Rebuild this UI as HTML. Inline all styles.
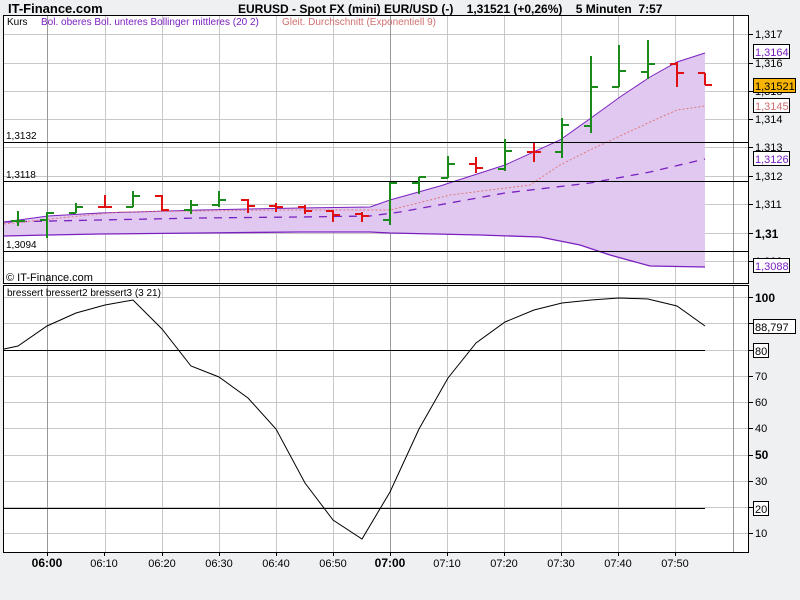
<!DOCTYPE html>
<html><head><meta charset="utf-8"><style>
body{margin:0;background:#eff0f2;}
svg{display:block;font-family:"Liberation Sans",sans-serif;}
</style></head><body>
<svg width="800" height="600" viewBox="0 0 800 600">
<rect width="800" height="600" fill="#eff0f2"/>
<text x="8" y="13" font-size="13" font-weight="bold" fill="#000">IT-Finance.com</text>
<text x="238" y="13" font-size="12" font-weight="bold" fill="#000" xml:space="preserve">EURUSD - Spot FX (mini) EUR/USD (-)    1,31521 (+0,26%)    5 Minuten  7:57</text>
<rect x="3.5" y="15.5" width="745" height="268" fill="#fff" stroke="#000"/>
<rect x="3.5" y="285.5" width="745" height="267" fill="#fff" stroke="#000"/>
<g stroke="#c8c8c8" stroke-width="1">
<path d="M4 34.5H748M4 63.5H748M4 91.5H748M4 119.5H748M4 147.5H748M4 176.5H748M4 204.5H748M4 233.5H748M4 261.5H748"/>
<path d="M4 297.5H748M4 323.5H748M4 350.5H748M4 376.5H748M4 402.5H748M4 428.5H748M4 455.5H748M4 481.5H748M4 507.5H748M4 533.5H748"/>
<path d="M105.5 16V283M162.5 16V283M219.5 16V283M276.5 16V283M333.5 16V283M447.5 16V283M504.5 16V283M561.5 16V283M618.5 16V283M675.5 16V283"/>
<path d="M105.5 286V552M162.5 286V552M219.5 286V552M276.5 286V552M333.5 286V552M447.5 286V552M504.5 286V552M561.5 286V552M618.5 286V552M675.5 286V552"/>
</g>
<g stroke="#999" stroke-width="1">
<path d="M47.5 16V283M390.5 16V283M733.5 16V283M47.5 286V552M390.5 286V552M733.5 286V552"/>
</g>
<path d="M4 222 L48 216 L100 213 L200 210 L300 208 L370 207 L390 200 L440 186 L505 165 L560 140 L591 118 L620 97 L650 77 L677 62 L705 53 L705 267 L650 266 L610 255 L580 245 L540 237 L480 235 L390 233 L370 232 L300 232 L200 233 L100 234 L48 235 L4 236 Z" fill="#e0c8f0"/>
<path d="M4 222 L48 216 L100 213 L200 210 L300 208 L370 207 L390 200 L440 186 L505 165 L560 140 L591 118 L620 97 L650 77 L677 62 L705 53" fill="none" stroke="#7a20c0" stroke-width="1"/>
<path d="M4 236 L48 235 L100 234 L200 233 L300 232 L370 232 L390 233 L480 235 L540 237 L580 245 L610 255 L650 266 L705 267" fill="none" stroke="#7a20c0" stroke-width="1.3"/>
<path d="M4 222 L100 220 L200 218 L300 217 L370 216 L400 212 L505 193 L590 183 L650 172 L705 159" fill="none" stroke="#7a20c0" stroke-width="1.3" stroke-dasharray="8,7"/>
<path d="M4 224 L60 218 L120 212 L200 211 L280 210 L390 210 L450 195 L530 185 L560 165 L590 150 L620 136 L650 122 L677 110 L705 106" fill="none" stroke="#e07878" stroke-width="1" stroke-dasharray="2,2"/>
<path d="M4 142.5H748M4 181.5H748M4 251.5H748M4 350.5H705M4 508.5H705" stroke="#000" stroke-width="1"/>
<g font-size="10" fill="#000">
<text x="6" y="139">1,3132</text><text x="6" y="178">1,3118</text><text x="6" y="248">1,3094</text>
</g>
<g stroke-width="2" fill="none">
<path stroke="#1a8a1a" d="M18 211V226M11 221H18M18 221H25 M47 212V238M40 220H47M47 213H54 M76 203V213M69 213H76M76 207H83 M133 191V207M126 207H133M133 196H140 M191 200V214M184 210H191M191 205H198 M219 191V207M212 205H219M219 200H226 M390 182V225M383 220H390M390 183H397 M419 177V194M412 183H419M419 177H426 M448 156V178M441 178H448M448 164H455 M505 139V171M498 169H505M505 151H512 M562 118V158M555 152H562M562 125H569 M591 56V133M584 126H591M591 87H598 M619 45V87M612 87H619M619 71H626 M648 40V79M641 72H648M648 64H655"/>
<path stroke="#e01010" d="M105 195V208M98 207H105M105 207H112 M162 195V211M155 196H162M162 210H169 M248 199V213M241 200H248M248 206H255 M276 203V212M269 206H276M276 207H283 M305 205V214M298 207H305M305 211H312 M333 210V222M326 211H333M333 215H340 M362 212V222M355 214H362M362 216H369 M476 157V173M469 164H476M476 168H483 M534 143V162M527 152H534M534 152H541 M677 62V87M670 64H677M677 73H684 M705 73V85M698 73H705M705 85H712"/>
</g>
<path d="M4 349 L18 346 L47 326 L76 313 L105 305 L133 300 L162 329 L191 366 L219 377 L248 398 L276 429 L305 483 L333 520 L362 539 L390 492 L419 429 L448 378 L476 343 L505 322 L534 310 L562 303 L591 300 L619 298 L648 299 L677 306 L705 326" fill="none" stroke="#000" stroke-width="1"/>
<text x="7" y="25" font-size="10" fill="#000">Kurs</text>
<text x="41" y="25" font-size="10" fill="#7a20c0">Bol. oberes Bol. unteres Bollinger mittleres (20 2)</text>
<text x="282" y="25" font-size="10" fill="#d07070">Gleit. Durchschnitt (Exponentiell 9)</text>
<text x="6" y="281" font-size="11" fill="#000">© IT-Finance.com</text>
<text x="7" y="296" font-size="10" fill="#000">bressert bressert2 bressert3 (3 21)</text>
<g stroke="#000"><path d="M749 34.5h4M749 63.5h4M749 91.5h4M749 119.5h4M749 147.5h4M749 176.5h4M749 204.5h4M749 233.5h4M749 261.5h4M749 297.5h4M749 323.5h4M749 350.5h4M749 376.5h4M749 402.5h4M749 428.5h4M749 455.5h4M749 481.5h4M749 507.5h4M749 533.5h4"/></g>
<g font-size="11" fill="#000">
<text x="755" y="38">1,317</text><text x="755" y="67">1,316</text><text x="755" y="95">1,315</text><text x="755" y="123">1,314</text><text x="755" y="151">1,313</text><text x="755" y="180">1,312</text><text x="755" y="208">1,311</text><text x="755" y="238" font-weight="bold" font-size="12">1,31</text><text x="755" y="265">1,309</text>
<text x="755" y="302" font-weight="bold" font-size="12">100</text><text x="755" y="327">90</text><text x="755" y="380">70</text><text x="755" y="406">60</text><text x="755" y="459" font-weight="bold" font-size="12">50</text><text x="755" y="432">40</text><text x="755" y="485">30</text><text x="755" y="537">10</text>
</g>
<rect x="753.5" y="44.5" width="36" height="14" fill="#fff" stroke="#000"/><text x="755" y="56" font-size="11" fill="#7a20c0">1,3164</text>
<rect x="753.5" y="78.5" width="42" height="14" fill="#f8b400" stroke="#000"/><text x="755" y="90" font-size="11" fill="#000">1,31521</text>
<rect x="753.5" y="98.5" width="36" height="14" fill="#fff" stroke="#000"/><text x="755" y="110" font-size="11" fill="#d07070">1,3145</text>
<rect x="753.5" y="151.5" width="36" height="14" fill="#fff" stroke="#000"/><text x="755" y="163" font-size="11" fill="#7a20c0">1,3126</text>
<rect x="753.5" y="258.5" width="36" height="14" fill="#fff" stroke="#000"/><text x="755" y="270" font-size="11" fill="#7a20c0">1,3088</text>
<rect x="753.5" y="319.5" width="42" height="14" fill="#fff" stroke="#000"/><text x="755" y="331" font-size="11" fill="#000">88,797</text>
<rect x="753.5" y="343.5" width="15" height="14" fill="#fff" stroke="#000"/><text x="755" y="355" font-size="11" fill="#000">80</text>
<rect x="753.5" y="501.5" width="15" height="14" fill="#fff" stroke="#000"/><text x="755" y="513" font-size="11" fill="#000">20</text>
<g stroke="#000"><path d="M47.5 552v4M104.5 552v4M162.5 552v4M219.5 552v4M276.5 552v4M333.5 552v4M390.5 552v4M447.5 552v4M504.5 552v4M561.5 552v4M618.5 552v4M675.5 552v4"/></g>
<g font-size="11" fill="#000" text-anchor="middle">
<text x="47" y="567" font-weight="bold" font-size="12">06:00</text><text x="104" y="567">06:10</text><text x="162" y="567">06:20</text><text x="219" y="567">06:30</text><text x="276" y="567">06:40</text><text x="333" y="567">06:50</text><text x="390" y="567" font-weight="bold" font-size="12">07:00</text><text x="447" y="567">07:10</text><text x="504" y="567">07:20</text><text x="561" y="567">07:30</text><text x="618" y="567">07:40</text><text x="675" y="567">07:50</text>
</g>
</svg>
</body></html>
